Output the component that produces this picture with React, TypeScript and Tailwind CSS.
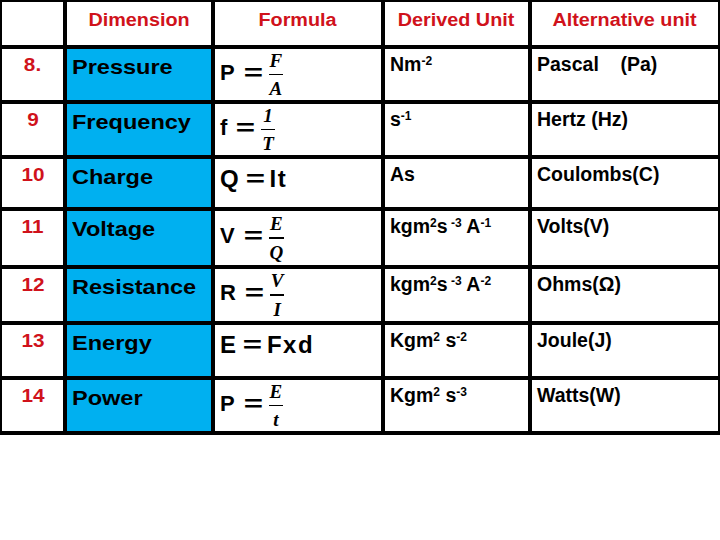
import React from "react";

type Frac = { lhs: string; num: string; den: string };
type Plain = { lhs: string; rhs: string };
type Row = {
  n: string;
  dim: string;
  formula: Plain | Frac;
  unit: React.ReactNode;
  alt: string;
};

const S = ({ children }: { children: React.ReactNode }) => (
  <sup className="text-[12px]">{children}</sup>
);

const rows: Row[] = [
  { n: "8.", dim: "Pressure", formula: { lhs: "P", num: "F", den: "A" }, unit: <>Nm<S>-2</S></>, alt: "Pascal    (Pa)" },
  { n: "9", dim: "Frequency", formula: { lhs: "f", num: "1", den: "T" }, unit: <>s<S>-1</S></>, alt: "Hertz (Hz)" },
  { n: "10", dim: "Charge", formula: { lhs: "Q", rhs: "It" }, unit: <>As</>, alt: "Coulombs(C)" },
  { n: "11", dim: "Voltage", formula: { lhs: "V", num: "E", den: "Q" }, unit: <>kgm<S>2</S>s<S> -3</S> A<S>-1</S></>, alt: "Volts(V)" },
  { n: "12", dim: "Resistance", formula: { lhs: "R", num: "V", den: "I" }, unit: <>kgm<S>2</S>s<S> -3</S> A<S>-2</S></>, alt: "Ohms(Ω)" },
  { n: "13", dim: "Energy", formula: { lhs: "E", rhs: "Fxd" }, unit: <>Kgm<S>2</S> s<S>-2</S></>, alt: "Joule(J)" },
  { n: "14", dim: "Power", formula: { lhs: "P", num: "E", den: "t" }, unit: <>Kgm<S>2</S> s<S>-3</S></>, alt: "Watts(W)" },
];

function Formula({ f }: { f: Plain | Frac }) {
  if ("rhs" in f) {
    return (
      <div className="bg-white pl-[5px] pt-[8px] text-black font-bold leading-none">
        <div className="flex items-center">
          <span className="text-[24px]">{f.lhs}</span>
          <span className="inline-block ml-[10px] scale-x-[1.5] text-[22px]">=</span>
          <span className="ml-[8px] text-[24px] tracking-[1.5px]">{f.rhs}</span>
        </div>
      </div>
    );
  }
  return (
    <div className="bg-white pl-[5px] flex items-center">
      <span className="text-[22px] leading-none font-bold text-black mb-[4px]">{f.lhs}</span>
      <span className="inline-block ml-[12px] mb-[4px] scale-x-[1.5] text-[22px] leading-none font-bold text-black">=</span>
      <span className="ml-[9px] inline-flex flex-col items-stretch font-['Liberation_Serif',serif] italic font-bold text-[19px] leading-none text-black">
        <span className="text-center px-[1px]">{f.num}</span>
        <span className="h-[1.5px] bg-black my-[4px]" />
        <span className="text-center px-[1px]">{f.den}</span>
      </span>
    </div>
  );
}

export default function App() {
  const head = "bg-white text-center pt-[9px] text-[18px] leading-none font-bold text-[#d0121b]";
  const H = ({ t }: { t: string }) => (
    <div className={head}>
      <span className="inline-block scale-x-[1.1]">{t}</span>
    </div>
  );
  return (
    <div className="w-[720px] h-[540px] bg-white font-['Liberation_Sans',Arial,sans-serif]">
      <div className="grid grid-cols-[61px_144px_166px_143px_186px] grid-rows-[43px_51px_51px_48px_54px_52px_51px_51px] gap-[4px] bg-black pt-[2px] px-[2px] pb-[4px]">
        <div className="bg-white" />
        <H t="Dimension" />
        <H t="Formula" />
        <H t="Derived Unit" />
        <H t="Alternative unit" />
        {rows.map((r) => (
          <React.Fragment key={r.n}>
            <div className="bg-white text-center pl-[1px] pt-[7px] text-[18px] leading-none font-bold text-[#d0121b]">
              <span className="inline-block scale-x-[1.15]">{r.n}</span>
            </div>
            <div className="bg-[#00b0f0] pl-[5px] pt-[7px] text-[21px] leading-none font-bold text-black">
              <span className="inline-block origin-left scale-x-[1.12] whitespace-pre">{r.dim}</span>
            </div>
            <Formula f={r.formula} />
            <div className="bg-white pl-[5px] pt-[6px] text-[19.5px] leading-none font-bold text-black whitespace-pre">
              {r.unit}
            </div>
            <div className="bg-white pl-[5px] pt-[6px] text-[19.5px] leading-none font-bold text-black whitespace-pre">
              {r.alt}
            </div>
          </React.Fragment>
        ))}
      </div>
    </div>
  );
}
